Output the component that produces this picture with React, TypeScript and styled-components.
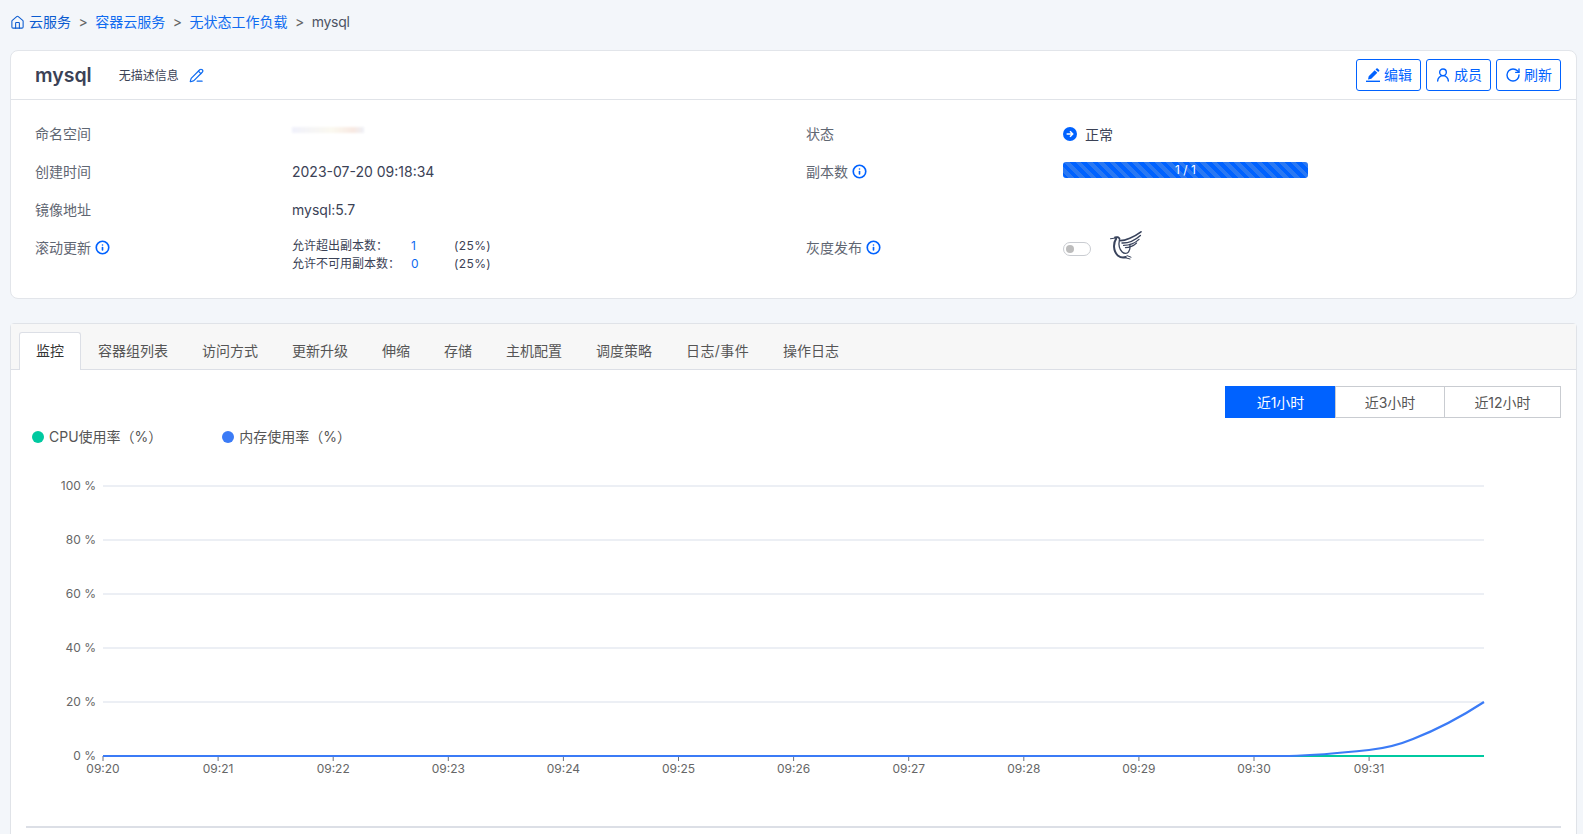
import React from "react";
import styled, { createGlobalStyle } from "styled-components";
import { Home, Info, PencilLine, RotateCw, UserRound } from "lucide-react";

const FONT = `Inter, "Noto Sans CJK SC", "Noto Sans", sans-serif`;

const GlobalStyle = createGlobalStyle`
  html, body {
    margin: 0;
    height: 100%;
    overflow: hidden;
    background: #f3f6fa;
    font-family: ${FONT};
    font-size: 14px;
    color: #3b4256;
  }
  * { box-sizing: border-box; }
`;

const TABS = ["监控", "容器组列表", "访问方式", "更新升级", "伸缩", "存储", "主机配置", "调度策略", "日志/事件", "操作日志"];
const RANGES = ["近1小时", "近3小时", "近12小时"];
const Y_TICKS = [100, 80, 60, 40, 20, 0];
const X_TICKS = ["09:20", "09:21", "09:22", "09:23", "09:24", "09:25", "09:26", "09:27", "09:28", "09:29", "09:30", "09:31"];

export default function App() {
  return (
    <Page>
      <GlobalStyle />
      <Breadcrumb>
        <Home size={15} color="#0b5bd0" strokeWidth={1.7} />
        <Crumb $dark>云服务</Crumb>
        <Sep>&gt;</Sep>
        <Crumb>容器云服务</Crumb>
        <Sep>&gt;</Sep>
        <Crumb>无状态工作负载</Crumb>
        <Sep>&gt;</Sep>
        <Current>mysql</Current>
      </Breadcrumb>

      <InfoCard>
        <CardHead>
          <Title>mysql</Title>
          <Description>无描述信息</Description>
          <EditLink>
            <PencilLine size={15} strokeWidth={1.9} />
          </EditLink>
          <Actions>
            <ActionButton>
              <svg width="16" height="16" viewBox="0 0 16 16" fill="#0062ff">
                <path d="M1 13.6h14V15H1z" />
                <path d="M3 12.4l.7-3.2 6-6 2.6 2.6-6 6zM10.5 2.4l1-1c.3-.3.8-.3 1.1 0l1.6 1.6c.3.3.3.8 0 1.1l-1 1z" />
              </svg>
              <ButtonText>编辑</ButtonText>
            </ActionButton>
            <ActionButton>
              <UserRound size={16} strokeWidth={2.1} />
              <ButtonText>成员</ButtonText>
            </ActionButton>
            <ActionButton>
              <RotateCw size={16} strokeWidth={2.1} />
              <ButtonText>刷新</ButtonText>
            </ActionButton>
          </Actions>
        </CardHead>

        <InfoGrid>
          <Label>命名空间</Label>
          <Value>
            <Redacted />
          </Value>
          <Label>状态</Label>
          <Value>
            <Status>
              <svg width="14" height="14" viewBox="0 0 14 14">
                <circle cx="7" cy="7" r="7" fill="#0062ff" />
                <path d="M3.6 7h6M7 4.3L9.7 7 7 9.7" fill="none" stroke="#fff" strokeWidth="1.5" />
              </svg>
              正常
            </Status>
          </Value>

          <Label>创建时间</Label>
          <Value>2023-07-20 09:18:34</Value>
          <Label>
            副本数 <TipIcon />
          </Label>
          <Value>
            <Replicas>1 / 1</Replicas>
          </Value>

          <Label>镜像地址</Label>
          <Value>mysql:5.7</Value>
          <Label />
          <Value />

          <Label>
            滚动更新 <TipIcon />
          </Label>
          <RollingTable>
            <span>允许超出副本数：</span>
            <Num>1</Num>
            <Percent>(25%)</Percent>
            <span>允许不可用副本数：</span>
            <Num>0</Num>
            <Percent>(25%)</Percent>
          </RollingTable>
          <Label>
            灰度发布 <TipIcon />
          </Label>
          <Value>
            <GrayRow>
              <Toggle />
              <Bird />
            </GrayRow>
          </Value>
        </InfoGrid>
      </InfoCard>

      <TabCard>
        <TabBar>
          {TABS.map((t, i) => (
            <Tab key={t} $active={i === 0} $slash={t.includes("/")}>
              {t}
            </Tab>
          ))}
        </TabBar>
        <RangeRow>
          <RangeGroup>
            {RANGES.map((r, i) => (
              <RangeButton key={r} $active={i === 0} $wide={i === 2}>
                {r}
              </RangeButton>
            ))}
          </RangeGroup>
        </RangeRow>
        <Legend>
          <LegendItem $color="#00c9a0">CPU使用率（%）</LegendItem>
          <LegendItem $color="#3b7bf6">内存使用率（%）</LegendItem>
        </Legend>
        <Chart />
        <ChartRule />
      </TabCard>
    </Page>
  );
}

const TipIcon = () => (
  <TipWrap>
    <Info size={15} strokeWidth={2.6} />
  </TipWrap>
);

const Bird = () => (
  <svg width="32" height="30" viewBox="0 0 32 30" fill="none" stroke="#39435c" strokeLinecap="round">
    <path d="M0.5 7.8l5-.8" strokeWidth="1.1" />
    <path d="M5 6.4c2-.8 4-.2 4.6 1.6" strokeWidth="1.8" />
    <path d="M6.2 7.6C3.2 12 3 20 7.8 24.4c2.4 2 5.6 2.6 8 1.6" strokeWidth="2" />
    <path d="M9.4 8.8c-.8 4-.4 9 2.8 12.2 1.8 1.8 5 1.8 6.4-.2 1.4-2 1.6-5 1.4-7.4" strokeWidth="1.3" />
    <path d="M10.4 9.6C15 9.6 24 6 31 .8" strokeWidth="1.6" />
    <path d="M12 12C17.4 12.2 25 9.2 30.4 4.4" strokeWidth="1.4" />
    <path d="M13.6 14.4c5 0 11.4-2.2 15.4-6" strokeWidth="1.3" />
    <path d="M15.4 16.6c4 0 8.2-1.8 11.2-4.6" strokeWidth="1.1" />
    <path d="M14 26.4l6 1.6M17 24.6l4 1.6" strokeWidth="1" />
  </svg>
);

const Chart = () => {
  const left = 92;
  const right = 1473;
  const step = 115.1;
  const yOf = (v: number) => 309 - v * 2.7;
  return (
    <ChartSvg viewBox="0 0 1565 379" width="1565" height="379">
      {Y_TICKS.map((v) => (
        <g key={v}>
          {v > 0 && <line x1={left} x2={right} y1={yOf(v)} y2={yOf(v)} stroke="#d9dfea" strokeWidth="1" />}
          <AxisText x={85} y={yOf(v) + 4} textAnchor="end">
            {v} %
          </AxisText>
        </g>
      ))}
      {X_TICKS.map((t, i) => (
        <g key={t}>
          <line x1={left + i * step} x2={left + i * step} y1={309} y2={314} stroke="#6e7079" />
          <AxisText x={left + i * step} y={326} textAnchor="middle">
            {t}
          </AxisText>
        </g>
      ))}
      <line x1={left} x2={right} y1={309} y2={309} stroke="#00c9a0" strokeWidth="2.2" />
      <path
        d={`M${left} 309 L1278 309 C1300 308.5 1330 306 1358 303 C1372 301.5 1390 297 1402 292 C1425 283 1450 270 1473 255`}
        fill="none"
        stroke="#3b7bf6"
        strokeWidth="2.2"
      />
    </ChartSvg>
  );
};

const Page = styled.div`
  width: 1583px;
  height: 834px;
  padding: 0 6px 0 10px;
  overflow: hidden;
`;

const Breadcrumb = styled.nav`
  height: 44px;
  margin-bottom: 6px;
  display: flex;
  align-items: center;
  gap: 4px;
  line-height: 16px;
`;

const Crumb = styled.a<{ $dark?: boolean }>`
  color: ${(p) => (p.$dark ? "#0b5bd0" : "#0f6bf0")};
`;

const Sep = styled.span`
  color: #666;
  margin: 0 3.5px;
`;

const Current = styled.span`
  color: #4d5464;
  letter-spacing: -0.3px;
`;

const InfoCard = styled.section`
  height: 249px;
  background: #fff;
  border: 1px solid #e2e5ea;
  border-radius: 8px;
`;

const CardHead = styled.header`
  height: 49px;
  padding: 0 15px 0 24px;
  display: flex;
  align-items: center;
  border-bottom: 1px solid #e0e3e8;
`;

const Title = styled.h1`
  margin: 0;
  font-size: 19.5px;
  font-weight: 600;
  color: #3b4256;
`;

const Description = styled.span`
  margin: 0 0 2px 27px;
  font-size: 12px;
  color: #3b4256;
`;

const EditLink = styled.a`
  margin-left: 10px;
  display: flex;
  color: #0f6bf0;
`;

const Actions = styled.div`
  margin-left: auto;
  display: flex;
  gap: 5px;
`;

const ActionButton = styled.button`
  height: 32px;
  padding: 0 8px;
  display: flex;
  align-items: center;
  gap: 3px;
  background: #fff;
  border: 1px solid #0062ff;
  border-radius: 3px;
  color: #0062ff;
  font-family: ${FONT};
  font-size: 14px;
`;

const ButtonText = styled.span`
  margin-bottom: 2px;
`;

const InfoGrid = styled.div`
  padding: 14px 0 0 24px;
  display: grid;
  grid-template-columns: 257px 514px 257px 1fr;
  grid-auto-rows: 38px;
`;

const Label = styled.div`
  display: flex;
  align-items: center;
  gap: 3px;
  color: #5f6672;
`;

const Value = styled.div`
  display: flex;
  align-items: center;
  color: #3b4256;
`;

const TipWrap = styled.span`
  display: inline-flex;
  color: #0062ff;
  margin-left: 1px;
`;

const Redacted = styled.span`
  display: block;
  width: 72px;
  height: 6px;
  margin-top: -6px;
  background: linear-gradient(90deg, #f0f1fb, #fbf9f0 55%, #f8e9e2 85%, #eef0f6);
  filter: blur(1px);
`;

const Status = styled.span`
  display: flex;
  align-items: center;
  gap: 8px;
  margin-top: 2px;
`;

const Replicas = styled.div`
  width: 245px;
  height: 16px;
  margin-top: -3px;
  border-radius: 3px;
  background: repeating-linear-gradient(45deg, #0062ff 0 4px, #2a78f2 4px 8px);
  color: #fff;
  font-size: 12px;
  line-height: 16px;
  text-align: center;
`;

const RollingTable = styled.div`
  padding-top: 9px;
  display: grid;
  grid-template-columns: 119px 43px auto;
  grid-auto-rows: 18px;
  align-content: start;
  justify-content: start;
  font-size: 12px;
  line-height: 18px;
  color: #3b4256;
`;

const Num = styled.span`
  color: #0f6bf0;
`;

const Percent = styled.span`
  letter-spacing: 0.4px;
`;

const GrayRow = styled.div`
  display: flex;
  align-items: center;
  gap: 19px;
  margin-top: -2px;
`;

const Toggle = styled.span`
  position: relative;
  display: block;
  width: 28px;
  height: 14px;
  margin-top: 5px;
  border: 1px solid #c9ccd1;
  border-radius: 7px;
  background: #fff;
  &::after {
    content: "";
    position: absolute;
    left: 2px;
    top: 2px;
    width: 8px;
    height: 8px;
    border-radius: 50%;
    background: #bdbdbd;
  }
`;

const TabCard = styled.section`
  margin-top: 24px;
  height: 540px;
  background: #fff;
  border: 1px solid #e0e3e8;
  border-radius: 4px 4px 0 0;
`;

const TabBar = styled.div`
  height: 46px;
  padding: 8px 8px 0;
  display: flex;
  background: #f7f7f7;
  border-bottom: 1px solid #dcdfe6;
`;

const Tab = styled.div<{ $active?: boolean; $slash?: boolean }>`
  height: ${(p) => (p.$active ? "38px" : "37px")};
  padding: 0 16px 3px;
  display: flex;
  align-items: center;
  border: 1px solid ${(p) => (p.$active ? "#dcdfe6" : "transparent")};
  border-bottom: none;
  border-radius: 3px 3px 0 0;
  background: ${(p) => (p.$active ? "#fff" : "transparent")};
  color: ${(p) => (p.$active ? "#333" : "#555")};
  letter-spacing: ${(p) => (p.$slash ? "0.4px" : "0")};
`;

const RangeRow = styled.div`
  padding: 16px 15px 0 0;
  display: flex;
  justify-content: flex-end;
`;

const RangeGroup = styled.div`
  display: flex;
`;

const RangeButton = styled.button<{ $active?: boolean; $wide?: boolean }>`
  width: ${(p) => (p.$wide ? "117px" : p.$active ? "111px" : "110px")};
  height: 32px;
  margin-left: -1px;
  background: ${(p) => (p.$active ? "#0062ff" : "#fff")};
  border: 1px solid ${(p) => (p.$active ? "#0062ff" : "#c9ccd1")};
  color: ${(p) => (p.$active ? "#fff" : "#555")};
  font-family: ${FONT};
  font-size: 14px;
`;

const Legend = styled.div`
  margin-top: 9px;
  height: 20px;
  padding-left: 21px;
  display: flex;
  gap: 60px;
  color: #555;
`;

const LegendItem = styled.span<{ $color: string }>`
  display: flex;
  align-items: center;
  gap: 5px;
  line-height: 20px;
  &::before {
    content: "";
    width: 12px;
    height: 12px;
    border-radius: 50%;
    background: ${(p) => p.$color};
  }
`;

const ChartSvg = styled.svg`
  display: block;
`;

const AxisText = styled.text`
  font-family: ${FONT};
  font-size: 12px;
  fill: #666;
`;

const ChartRule = styled.div`
  height: 2px;
  margin: 0 15px 0 15px;
  background: #dcdfe6;
`;
